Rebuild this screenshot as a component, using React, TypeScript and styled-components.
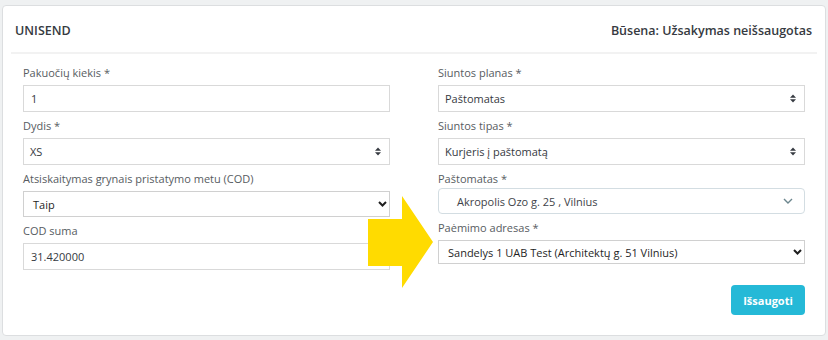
import React from "react";
import styled, { createGlobalStyle, css } from "styled-components";

const GlobalStyle = createGlobalStyle`
  html, body { margin: 0; padding: 0; }
  body {
    background: #eff1f2;
    font-family: "Open Sans", "Noto Sans", sans-serif;
    color: #363a41;
  }
  * { box-sizing: border-box; }
`;

const Page = styled.div`
  position: relative;
  width: 828px;
  height: 340px;
  padding: 5px 2px 2px 2px;
`;

const Card = styled.section`
  background: #fff;
  border: 1px solid #dcdee0;
  border-radius: 4px;
  padding: 0 8px;
`;

const Header = styled.header`
  display: flex;
  justify-content: space-between;
  align-items: center;
  padding: 16px 5px 12px 4px;
  line-height: 18px;
  border-bottom: 2px solid #f2f2f2;
  font-size: 12.5px;
  font-weight: 600;
  color: #363a41;
`;

const Title = styled.span`
  text-transform: uppercase;
`;

const Body = styled.div`
  display: grid;
  grid-template-columns: 1fr 1fr;
  column-gap: 48px;
  align-items: start;
  padding: 10px 12px 20px 12px;
`;

const Column = styled.div`
  display: flex;
  flex-direction: column;
`;

const Group = styled.div<{ $tight?: boolean }>`
  display: flex;
  flex-direction: column;
  margin-bottom: 5px;
  gap: ${(p) => (p.$tight ? "0px" : "3px")};
`;

const Label = styled.label`
  font-size: 11px;
  line-height: 18px;
  color: #575c61;
`;

const TextInput = styled.input`
  height: 27px;
  border: 1px solid #d9d9d9;
  padding: 0 7px;
  font-family: inherit;
  font-size: 11px;
  color: #363a41;
  background: #fff;
  outline: none;
`;

type Variant = "caret" | "native" | "select2";

const SelectBox = styled.div<{ $variant: Variant; $h: number }>`
  display: flex;
  align-items: center;
  justify-content: space-between;
  height: ${(p) => p.$h}px;
  background: #fff;
  font-size: 11px;
  border: 1px solid #d9d9d9;
  ${(p) =>
    p.$variant === "caret" &&
    css`
      padding: 0 8px 0 6px;
      color: #363a41;
    `}
  ${(p) =>
    p.$variant === "native" &&
    css`
      padding: 0 2px 0 9px;
      color: #1f1f1f;
      border-color: #d0d0d0;
    `}
  ${(p) =>
    p.$variant === "select2" &&
    css`
      padding: 0 11px 0 18px;
      color: #3e4348;
      border-color: #d3dde2;
      border-radius: 4px;
    `}
`;

const Value = styled.span`
  white-space: nowrap;
`;

const Actions = styled.div`
  display: flex;
  justify-content: flex-end;
  margin-top: 16px;
`;

const SaveButton = styled.button`
  width: 74px;
  height: 30px;
  border: none;
  border-radius: 4px;
  background: #25b9d7;
  color: #fff;
  font-family: inherit;
  font-size: 11px;
  font-weight: 700;
  cursor: pointer;
`;

const ArrowSvg = styled.svg`
  position: absolute;
  left: 368px;
  top: 196px;
`;

const Icon = ({ variant }: { variant: Variant }) => {
  if (variant === "caret")
    return (
      <svg width="6" height="9" viewBox="0 0 6 9">
        <polygon points="0,3.8 3,0.5 6,3.8" fill="#363a41" />
        <polygon points="0,5.2 3,8.5 6,5.2" fill="#363a41" />
      </svg>
    );
  if (variant === "native")
    return (
      <svg width="9" height="6" viewBox="0 0 9 6">
        <polyline points="1,1 4.5,4.5 8,1" fill="none" stroke="#1f1f1f" strokeWidth="2" />
      </svg>
    );
  return (
    <svg width="10" height="6" viewBox="0 0 10 6">
      <polyline points="1,1 5,5 9,1" fill="none" stroke="#6c868e" strokeWidth="1.4" />
    </svg>
  );
};

const Select = ({ value, variant, h = 27 }: { value: string; variant: Variant; h?: number }) => (
  <SelectBox $variant={variant} $h={h}>
    <Value>{value}</Value>
    <Icon variant={variant} />
  </SelectBox>
);

export default function App() {
  return (
    <>
      <GlobalStyle />
      <Page>
        <Card>
          <Header>
            <Title>Unisend</Title>
            <span>Būsena: Užsakymas neišsaugotas</span>
          </Header>
          <Body>
            <Column>
              <Group>
                <Label>Pakuočių kiekis *</Label>
                <TextInput defaultValue="1" />
              </Group>
              <Group>
                <Label>Dydis *</Label>
                <Select value="XS" variant="caret" />
              </Group>
              <Group>
                <Label>Atsiskaitymas grynais pristatymo metu (COD)</Label>
                <Select value="Taip" variant="native" h={26} />
              </Group>
              <Group>
                <Label>COD suma</Label>
                <TextInput defaultValue="31.420000" />
              </Group>
            </Column>
            <Column>
              <Group>
                <Label>Siuntos planas *</Label>
                <Select value="Paštomatas" variant="caret" />
              </Group>
              <Group>
                <Label>Siuntos tipas *</Label>
                <Select value="Kurjeris į paštomatą" variant="caret" />
              </Group>
              <Group $tight>
                <Label>Paštomatas *</Label>
                <Select value="Akropolis Ozo g. 25 , Vilnius" variant="select2" h={26} />
              </Group>
              <Group>
                <Label>Paėmimo adresas *</Label>
                <Select value="Sandelys 1 UAB Test (Architektų g. 51 Vilnius)" variant="native" h={24} />
              </Group>
              <Actions>
                <SaveButton type="button">Išsaugoti</SaveButton>
              </Actions>
            </Column>
          </Body>
        </Card>
        <ArrowSvg width="66" height="92" viewBox="0 0 66 92">
          <polygon points="0,23 34,23 34,0 65,46 34,92 34,70 0,70" fill="#ffdb00" />
        </ArrowSvg>
      </Page>
    </>
  );
}
